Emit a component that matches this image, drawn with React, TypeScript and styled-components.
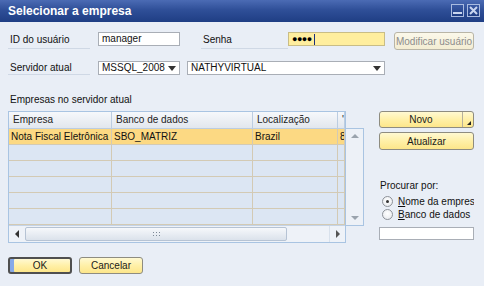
import React from 'react';
import styled, { createGlobalStyle } from 'styled-components';

const GlobalStyle = createGlobalStyle`
  html, body {
    margin: 0;
    padding: 0;
  }
  body {
    font-family: 'Liberation Sans', Arial, sans-serif;
    font-size: 10px;
    color: #111;
    background: #e9eef6;
  }
  * {
    box-sizing: border-box;
  }
`;

const Window = styled.div`
  width: 484px;
  height: 286px;
  background: #e9eef6;
  display: flex;
  flex-direction: column;
  overflow: hidden;
`;

const TitleBar = styled.div`
  height: 22px;
  flex: none;
  display: flex;
  align-items: center;
  justify-content: space-between;
  padding: 0 4px 0 8px;
  background: linear-gradient(to bottom, #4b6bb4 0%, #2f4f98 45%, #1f3e84 100%);
`;

const Title = styled.div`
  color: #fff;
  font-size: 12px;
  font-weight: bold;
`;

const TitleButtons = styled.div`
  display: flex;
  gap: 3px;
  margin-top: -1px;
`;

const TitleButton = styled.div`
  width: 13px;
  height: 13px;
  border: 1px solid #a9bbe0;
  background: linear-gradient(#3a5aa4, #1f3d84);
  display: flex;
  align-items: center;
  justify-content: center;
`;

const Content = styled.div`
  flex: 1;
  display: flex;
  flex-direction: column;
  padding: 10px 8px 0 8px;
`;

const FormRow = styled.div<{ $top?: number }>`
  display: flex;
  align-items: flex-start;
  margin-top: ${(p) => p.$top ?? 0}px;
`;

const FieldLabel = styled.div<{ $width: number; $height: number; $pad?: number; $left?: number }>`
  width: ${(p) => p.$width}px;
  height: ${(p) => p.$height}px;
  margin-left: ${(p) => p.$left ?? 0}px;
  padding: ${(p) => p.$pad ?? 0}px 0 0 2px;
  line-height: ${(p) => p.$height - (p.$pad ?? 0) - 1}px;
  border-bottom: 1px solid #cfd8e5;
  white-space: nowrap;
`;

const TextBox = styled.div<{ $width: number; $left?: number; $focused?: boolean; $height?: number }>`
  width: ${(p) => p.$width}px;
  height: ${(p) => p.$height ?? 14}px;
  margin-left: ${(p) => p.$left ?? 0}px;
  border: 1px solid ${(p) => (p.$focused ? '#c9bd86' : '#a9aeb6')};
  background: ${(p) => (p.$focused ? '#ffee9e' : '#fff')};
  padding: 0 3px;
  line-height: 12px;
  display: flex;
  align-items: center;
  white-space: nowrap;
`;

const Dots = styled.span`
  font-size: 9px;
  letter-spacing: -0.5px;
  color: #000;
`;

const Caret = styled.span`
  width: 1px;
  height: 11px;
  background: #1a2f7a;
  margin-left: 2px;
`;

const Select = styled.div<{ $width: number; $left?: number }>`
  width: ${(p) => p.$width}px;
  height: 14px;
  margin-left: ${(p) => p.$left ?? 0}px;
  border: 1px solid #a9aeb6;
  background: #fff;
  padding: 0 3px;
  display: flex;
  align-items: center;
  justify-content: space-between;
  line-height: 12px;
`;

const Button = styled.div<{ $width: number; $height?: number; $left?: number; $disabled?: boolean; $default?: boolean }>`
  width: ${(p) => p.$width}px;
  height: ${(p) => p.$height ?? 17}px;
  margin-left: ${(p) => p.$left ?? 0}px;
  border: ${(p) => (p.$default ? '2px solid #4f4f4f' : `1px solid ${p.$disabled ? '#b9b5a6' : '#8e8c80'}`)};
  border-radius: 3px;
  background: ${(p) =>
    p.$disabled ? 'linear-gradient(#fbf8ea, #f3edd3)' : 'linear-gradient(#fff9d2 0%, #fff0a8 50%, #fde68a 100%)'};
  box-shadow: ${(p) => (p.$default ? 'inset 4px 0 0 #86a9e8' : 'none')};
  color: ${(p) => (p.$disabled ? '#8c8c8c' : '#1a1a1a')};
  display: flex;
  align-items: center;
  justify-content: center;
  white-space: nowrap;
  flex: none;
`;

const SplitButton = styled(Button)`
  justify-content: space-between;
  padding: 0;
`;

const SplitMain = styled.span`
  flex: 1;
  text-align: center;
`;

const SplitArrow = styled.span`
  width: 11px;
  height: 100%;
  border-left: 1px solid #b5b09c;
  display: flex;
  align-items: flex-end;
  justify-content: flex-end;
  padding: 0 2px 2px 0;
`;

const SectionLabel = styled.div`
  margin-top: 18px;
  padding-left: 2px;
  line-height: 14px;
`;

const MainArea = styled.div`
  display: flex;
  margin-top: 4px;
`;

const GridMain = styled.div`
  width: 338px;
  height: 132px;
  display: flex;
  flex-direction: column;
  border: 1px solid #a9c4e2;
  background: #dce6f3;
`;

const columns = '103px 141px 85px 1fr';

const GridHeader = styled.div`
  display: grid;
  grid-template-columns: ${columns};
  height: 17px;
  flex: none;
  background: linear-gradient(#f6f8fb, #e2e7ee);
  border-bottom: 1px solid #bccde1;
`;

const HeaderCell = styled.div`
  padding-left: 4px;
  line-height: 16px;
  border-right: 1px solid #bccde1;
  white-space: nowrap;
  overflow: hidden;
  color: #222;
`;

const GridBody = styled.div`
  flex: 1;
  overflow: hidden;
`;

const GridRow = styled.div<{ $selected?: boolean }>`
  display: grid;
  grid-template-columns: ${columns};
  height: 16px;
  background: ${(p) => (p.$selected ? '#fcd983' : '#dce6f3')};
  border-bottom: 1px solid #d3cab4;
`;

const Cell = styled.div`
  padding-left: 2px;
  line-height: 15px;
  border-right: 1px solid #d3cab4;
  white-space: nowrap;
  overflow: hidden;
  color: #111;
`;

const HScroll = styled.div`
  height: 17px;
  flex: none;
  display: flex;
  background: #eef2f8;
  border-top: 1px solid #c4d3e6;
`;

const ScrollArrow = styled.div<{ $width: number }>`
  width: ${(p) => p.$width}px;
  flex: none;
  display: flex;
  align-items: center;
  justify-content: center;
`;

const HThumb = styled.div`
  width: 262px;
  margin: 1px 0;
  border: 1px solid #b6c3d4;
  border-radius: 2px;
  background: linear-gradient(#f6f8fb, #dbe2eb);
  display: flex;
  align-items: center;
  justify-content: center;
`;

const HTrack = styled.div`
  flex: 1;
  border-right: 1px solid #d8e1ec;
`;

const ScrollColumn = styled.div`
  width: 18px;
  display: flex;
  flex-direction: column;
`;

const VScroll = styled.div`
  margin-top: 17px;
  height: 98px;
  border: 1px solid #a9c4e2;
  border-left: none;
  background: #edf1f7;
  display: flex;
  flex-direction: column;
  justify-content: space-between;
  align-items: center;
  padding: 4px 0;
`;

const SidePanel = styled.div`
  margin-left: 15px;
  width: 95px;
  display: flex;
  flex-direction: column;
`;

const PanelText = styled.div`
  margin-top: 29px;
  line-height: 14px;
  padding-left: 1px;
`;

const RadioRow = styled.div`
  height: 13px;
  display: flex;
  align-items: center;
  gap: 5px;
  padding-left: 3px;
  white-space: nowrap;
  overflow: hidden;
`;

const RadioCircle = styled.span<{ $checked?: boolean }>`
  width: 11px;
  height: 11px;
  flex: none;
  border-radius: 50%;
  border: 1px solid #8d9198;
  background: radial-gradient(circle at 50% 40%, #ffffff 0%, #e4e7ec 100%);
  display: inline-flex;
  align-items: center;
  justify-content: center;

  &::after {
    content: '';
    width: 3px;
    height: 3px;
    border-radius: 50%;
    background: #333;
    display: ${(p) => (p.$checked ? 'block' : 'none')};
  }
`;

const Footer = styled.div`
  display: flex;
  margin-top: 14px;
`;

const Arrow = ({ dir, color = '#9aa3ad' }: { dir: 'up' | 'down' | 'left' | 'right'; color?: string }) => {
  const pts = {
    up: '0,5 4,1 8,5',
    down: '0,1 4,5 8,1',
    left: '5,0 1,4 5,8',
    right: '1,0 5,4 1,8',
  }[dir];
  const vertical = dir === 'up' || dir === 'down';
  return (
    <svg width={vertical ? 8 : 6} height={vertical ? 6 : 8}>
      <polygon points={pts} fill={color} />
    </svg>
  );
};

const DropArrow = () => (
  <svg width="8" height="5">
    <polygon points="0,0 8,0 4,5" fill="#333" />
  </svg>
);

const Grip = () => (
  <svg width="7" height="5">
    {[0, 3, 6].map((x) =>
      [0, 3].map((y) => <rect key={`${x}-${y}`} x={x} y={y} width="1" height="1" fill="#7d8896" />)
    )}
  </svg>
);

const rows = [
  { empresa: 'Nota Fiscal Eletrônica', banco: 'SBO_MATRIZ', local: 'Brazil', extra: '8:' },
  { empresa: '', banco: '', local: '', extra: '' },
  { empresa: '', banco: '', local: '', extra: '' },
  { empresa: '', banco: '', local: '', extra: '' },
  { empresa: '', banco: '', local: '', extra: '' },
  { empresa: '', banco: '', local: '', extra: '' },
];

const App = () => {
  return (
    <>
      <GlobalStyle />
      <Window>
        <TitleBar>
          <Title>Selecionar a empresa</Title>
          <TitleButtons>
            <TitleButton>
              <svg width="9" height="9">
                <rect x="0" y="6" width="9" height="2" fill="#c9d5ef" />
              </svg>
            </TitleButton>
            <TitleButton>
              <svg width="9" height="9">
                <path d="M1 1 L8 8 M8 1 L1 8" stroke="#c9d5ef" strokeWidth="2" />
              </svg>
            </TitleButton>
          </TitleButtons>
        </TitleBar>

        <Content>
          <FormRow>
            <FieldLabel $width={82} $height={17}>ID do usuário</FieldLabel>
            <TextBox $width={82} $left={8}>manager</TextBox>
            <FieldLabel $width={87} $height={17} $left={21}>Senha</FieldLabel>
            <TextBox $width={97} $focused>
              <Dots>●●●●</Dots>
              <Caret />
            </TextBox>
            <Button $width={80} $height={18} $left={9} $disabled>
              Modificar usuário
            </Button>
          </FormRow>

          <FormRow $top={11}>
            <FieldLabel $width={82} $height={14} $pad={1}>Servidor atual</FieldLabel>
            <Select $width={82} $left={8}>
              MSSQL_2008
              <DropArrow />
            </Select>
            <Select $width={198} $left={7}>
              NATHYVIRTUAL
              <DropArrow />
            </Select>
          </FormRow>

          <SectionLabel>Empresas no servidor atual</SectionLabel>

          <MainArea>
            <GridMain>
              <GridHeader>
                <HeaderCell>Empresa</HeaderCell>
                <HeaderCell>Banco de dados</HeaderCell>
                <HeaderCell>Localização</HeaderCell>
                <HeaderCell>'</HeaderCell>
              </GridHeader>
              <GridBody>
                {rows.map((r, i) => (
                  <GridRow key={i} $selected={i === 0}>
                    <Cell>{r.empresa}</Cell>
                    <Cell>{r.banco}</Cell>
                    <Cell>{r.local}</Cell>
                    <Cell>{r.extra}</Cell>
                  </GridRow>
                ))}
              </GridBody>
              <HScroll>
                <ScrollArrow $width={16}>
                  <Arrow dir="left" color="#333" />
                </ScrollArrow>
                <HThumb>
                  <Grip />
                </HThumb>
                <HTrack />
                <ScrollArrow $width={15}>
                  <Arrow dir="right" color="#555" />
                </ScrollArrow>
              </HScroll>
            </GridMain>
            <ScrollColumn>
              <VScroll>
                <Arrow dir="up" />
                <Arrow dir="down" />
              </VScroll>
            </ScrollColumn>

            <SidePanel>
              <SplitButton $width={95}>
                <SplitMain>Novo</SplitMain>
                <SplitArrow>
                  <svg width="4" height="4">
                    <polygon points="4,0 4,4 0,4" fill="#222" />
                  </svg>
                </SplitArrow>
              </SplitButton>
              <Button $width={95} $height={18} style={{ marginTop: 4 }}>
                Atualizar
              </Button>
              <PanelText>Procurar por:</PanelText>
              <RadioRow style={{ marginTop: 2 }}>
                <RadioCircle $checked />
                <span>
                  <u>N</u>ome da empresa
                </span>
              </RadioRow>
              <RadioRow>
                <RadioCircle />
                <span>
                  <u>B</u>anco de dados
                </span>
              </RadioRow>
              <TextBox $width={95} $height={13} style={{ marginTop: 6 }} />
            </SidePanel>
          </MainArea>

          <Footer>
            <Button $width={64} $default>
              OK
            </Button>
            <Button $width={64} $left={7}>
              Cancelar
            </Button>
          </Footer>
        </Content>
      </Window>
    </>
  );
};

export default App;
